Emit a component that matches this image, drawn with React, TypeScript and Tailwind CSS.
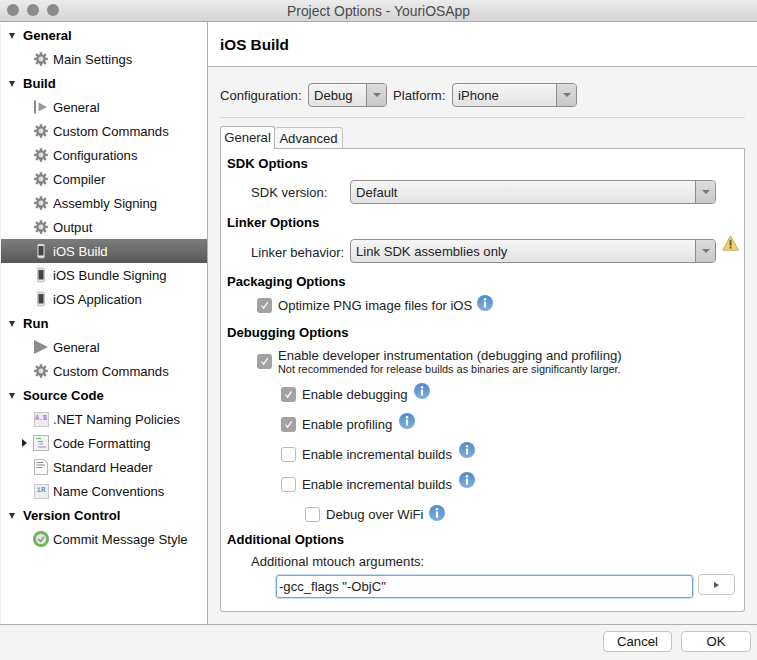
import type { ReactNode } from "react";

type IconKind = "gear" | "build" | "phone" | "run" | "naming" | "format" | "header" | "conv" | "commit";

type SideRow = { label: string; icon: IconKind; selected?: boolean; expandable?: boolean };
type SideGroup = { title: string; rows: SideRow[] };

const groups: SideGroup[] = [
  { title: "General", rows: [{ label: "Main Settings", icon: "gear" }] },
  {
    title: "Build",
    rows: [
      { label: "General", icon: "build" },
      { label: "Custom Commands", icon: "gear" },
      { label: "Configurations", icon: "gear" },
      { label: "Compiler", icon: "gear" },
      { label: "Assembly Signing", icon: "gear" },
      { label: "Output", icon: "gear" },
      { label: "iOS Build", icon: "phone", selected: true },
      { label: "iOS Bundle Signing", icon: "phone" },
      { label: "iOS Application", icon: "phone" },
    ],
  },
  {
    title: "Run",
    rows: [
      { label: "General", icon: "run" },
      { label: "Custom Commands", icon: "gear" },
    ],
  },
  {
    title: "Source Code",
    rows: [
      { label: ".NET Naming Policies", icon: "naming" },
      { label: "Code Formatting", icon: "format", expandable: true },
      { label: "Standard Header", icon: "header" },
      { label: "Name Conventions", icon: "conv" },
    ],
  },
  { title: "Version Control", rows: [{ label: "Commit Message Style", icon: "commit" }] },
];

function Gear() {
  return (
    <svg width="16" height="16" viewBox="0 0 16 16">
      <g stroke="#858585" strokeWidth="2.4">
        <line x1="8" y1="1.2" x2="8" y2="14.8" />
        <line x1="1.2" y1="8" x2="14.8" y2="8" />
        <line x1="3.2" y1="3.2" x2="12.8" y2="12.8" />
        <line x1="12.8" y1="3.2" x2="3.2" y2="12.8" />
      </g>
      <circle cx="8" cy="8" r="4.8" fill="#858585" />
      <circle cx="8" cy="8" r="2.4" fill="#e2e2e2" />
    </svg>
  );
}

function SideIcon({ kind }: { kind: IconKind }) {
  if (kind === "gear") return <Gear />;
  if (kind === "build")
    return (
      <svg width="16" height="16" viewBox="0 0 16 16">
        <rect x="1" y="1.5" width="2" height="13" fill="#8a8a8a" />
        <path d="M5.5 3.5 L14 8 L5.5 12.5 Z" fill="#999" />
      </svg>
    );
  if (kind === "phone")
    return (
      <svg width="16" height="16" viewBox="0 0 16 16">
        <rect x="4.5" y="1" width="7" height="14" rx="1.5" fill="#e4e4e4" stroke="#aaa" strokeWidth="0.7" />
        <rect x="5.5" y="3" width="5" height="9.5" fill="#444" />
      </svg>
    );
  if (kind === "run")
    return (
      <svg width="16" height="16" viewBox="0 0 16 16">
        <path d="M1 1 L15 8 L1 15 Z" fill="#8c8c8c" />
      </svg>
    );
  if (kind === "naming")
    return (
      <span className="flex h-[15px] w-[15px] items-center justify-center border border-[#c9c9c9] bg-[#efe9f1] font-['Liberation_Mono',monospace] text-[6.5px] font-bold leading-none text-[#b27ac4]">
        A.B
      </span>
    );
  if (kind === "conv")
    return (
      <span className="flex h-[15px] w-[15px] items-center justify-center border border-[#c9c9c9] bg-[#e9eef5] font-['Liberation_Mono',monospace] text-[7.5px] font-bold leading-none text-[#6f97c9]">
        iR
      </span>
    );
  if (kind === "format")
    return (
      <svg width="16" height="16" viewBox="0 0 16 16">
        <rect x="0.5" y="0.5" width="15" height="15" fill="#f2f2f2" stroke="#b5b5b5" />
        <line x1="3" y1="3.5" x2="8" y2="3.5" stroke="#6cb86c" />
        <line x1="5" y1="6.5" x2="10" y2="6.5" stroke="#6f97c9" />
        <line x1="6" y1="9" x2="10" y2="9" stroke="#6f97c9" />
        <line x1="5" y1="12" x2="13" y2="12" stroke="#bd7ccb" />
      </svg>
    );
  if (kind === "header")
    return (
      <svg width="16" height="16" viewBox="0 0 16 16">
        <path d="M1.5 0.5 H11 L14.5 4 V15.5 H1.5 Z" fill="#fafafa" stroke="#b5b5b5" />
        <line x1="3.5" y1="3.5" x2="10" y2="3.5" stroke="#8a8a8a" />
        <line x1="3.5" y1="6" x2="12" y2="6" stroke="#8a8a8a" />
        <line x1="3.5" y1="8.5" x2="9" y2="8.5" stroke="#8a8a8a" />
      </svg>
    );
  return (
    <svg width="16" height="16" viewBox="0 0 16 16">
      <circle cx="8" cy="8" r="8" fill="#6cb35c" />
      <circle cx="8" cy="8" r="5.2" fill="#dfe5dc" />
      <path d="M5.2 8 L7.4 10.4 L11 5.8" fill="none" stroke="#8d9a88" strokeWidth="1.6" />
    </svg>
  );
}

function Sidebar() {
  return (
    <div className="ml-px w-[207px] shrink-0 border-r border-[#b0b0b0] bg-white pt-px text-[13.1px]">
      {groups.map((group) => (
        <div key={group.title}>
          <div className="flex h-6 items-center pl-[8px] pt-[2px] font-bold text-black">
            <span className="mr-[8px] h-0 w-0 border-x-[3px] border-t-[6px] border-x-transparent border-t-[#333]" />
            {group.title}
          </div>
          {group.rows.map((row) => (
            <div
              key={row.label + row.icon}
              className={`relative flex h-6 items-center pl-[32px] ${
                row.selected ? "bg-gradient-to-b from-[#7d7d7d] to-[#585858] text-white" : "text-[#111]"
              }`}
            >
              {row.expandable && (
                <span className="absolute left-[21px] h-0 w-0 border-y-[4px] border-l-[5px] border-y-transparent border-l-[#222]" />
              )}
              <span className="mr-[4px] flex w-4 justify-center">
                <SideIcon kind={row.icon} />
              </span>
              <span className="pt-[2px]">{row.label}</span>
            </div>
          ))}
        </div>
      ))}
    </div>
  );
}

function Combo({ value, className }: { value: string; className: string }) {
  return (
    <div
      className={`flex h-6 items-stretch rounded-[4px] border border-[#8e8e8e] bg-gradient-to-b from-[#f6f6f6] to-[#e2e2e2] text-[13.1px] text-[#222] ${className}`}
    >
      <span className="flex-1 pl-[5px] pt-px leading-[22px]">{value}</span>
      <span className="flex w-5 items-center justify-center rounded-r-[3px] border-l border-[#8e8e8e] bg-gradient-to-b from-[#dcdcdc] to-[#c8c8c8]">
        <span className="h-0 w-0 border-x-[4px] border-t-[4px] border-x-transparent border-t-[#777]" />
      </span>
    </div>
  );
}

function Check({ checked }: { checked?: boolean }) {
  if (!checked) return <span className="h-[15px] w-[15px] shrink-0 rounded-[3px] border border-[#b9b9b9] bg-white" />;
  return (
    <span className="flex h-[15px] w-[15px] shrink-0 items-center justify-center rounded-[3px] bg-[#a2a2a2]">
      <svg width="11" height="11" viewBox="0 0 11 11">
        <path d="M2.5 5.5 L4.6 8.2 L8.6 2.4" fill="none" stroke="#fff" strokeWidth="1.2" />
      </svg>
    </span>
  );
}

function Info({ className }: { className: string }) {
  return (
    <svg width="16" height="16" viewBox="0 0 16 16" className={className}>
      <defs>
        <linearGradient id="infoFill" x1="0" y1="0" x2="0" y2="1">
          <stop offset="0" stopColor="#4f8ccb" />
          <stop offset="1" stopColor="#82aedb" />
        </linearGradient>
      </defs>
      <circle cx="8" cy="8" r="8" fill="url(#infoFill)" />
      <circle cx="8" cy="4.2" r="1.3" fill="#fff" />
      <rect x="6.9" y="6.5" width="2.2" height="6" fill="#fff" />
    </svg>
  );
}

function OptionRow({ checked, label, className, infoClass }: { checked?: boolean; label: string; className: string; infoClass: string }) {
  return (
    <div className={`flex h-4 items-center ${className}`}>
      <Check checked={checked} />
      <span className="ml-[6px] whitespace-nowrap pt-px">{label}</span>
      <Info className={`shrink-0 ${infoClass}`} />
    </div>
  );
}

function SectionTitle({ children, className }: { children: ReactNode; className: string }) {
  return <div className={`h-4 pt-px font-bold leading-4 text-black ${className}`}>{children}</div>;
}

function GeneralTab() {
  return (
    <div className="h-[464px] rounded-b-[3px] border border-[#b4b4b4] bg-white pl-[6px] text-[13.1px] text-[#222]">
      <SectionTitle className="mt-[6px]">SDK Options</SectionTitle>
      <div className="mt-[9px] flex h-6 items-center">
        <span className="ml-6 w-[99px] pt-px">SDK version:</span>
        <Combo value="Default" className="w-[366px]" />
      </div>
      <SectionTitle className="mt-[10px]">Linker Options</SectionTitle>
      <div className="mt-[9px] flex h-6 items-start">
        <span className="ml-6 mt-[4px] w-[99px] whitespace-nowrap">Linker behavior:</span>
        <Combo value="Link SDK assemblies only" className="w-[366px]" />
        <svg width="17" height="16" viewBox="0 0 17 16" className="-mt-[4px] ml-[6px]">
          <path d="M8.5 0.8 L16.3 15.2 H0.7 Z" fill="#ecd377" stroke="#c9ad57" strokeLinejoin="round" />
          <rect x="7.6" y="4.8" width="1.9" height="5.8" fill="#6e5a23" />
          <rect x="7.6" y="11.6" width="1.9" height="1.9" fill="#6e5a23" />
        </svg>
      </div>
      <SectionTitle className="mt-[10px]">Packaging Options</SectionTitle>
      <OptionRow checked label="Optimize PNG image files for iOS" className="mt-2 ml-[30px]" infoClass="ml-[5px] mb-[4px]" />
      <SectionTitle className="mt-[11px]">Debugging Options</SectionTitle>
      <div className="mt-[7px] ml-[30px] flex h-7 items-center">
        <Check checked />
        <div className="ml-[6px]">
          <div className="h-4 pt-px leading-4">Enable developer instrumentation (debugging and profiling)</div>
          <div className="h-3 text-[10.9px] leading-3">Not recommended for release builds as binaries are significantly larger.</div>
        </div>
      </div>
      <OptionRow checked label="Enable debugging" className="mt-[11px] ml-[54px]" infoClass="ml-[6px] mb-[7px]" />
      <OptionRow checked label="Enable profiling" className="mt-[14px] ml-[54px]" infoClass="ml-[7px] mb-[7px]" />
      <OptionRow label="Enable incremental builds" className="mt-[14px] ml-[54px]" infoClass="ml-[7px] mb-[8px]" />
      <OptionRow label="Enable incremental builds" className="mt-[14px] ml-[54px]" infoClass="ml-[7px] mb-[8px]" />
      <OptionRow label="Debug over WiFi" className="mt-[14px] ml-[78px]" infoClass="ml-[5px] mb-[2px]" />
      <SectionTitle className="mt-[9px]">Additional Options</SectionTitle>
      <div className="mt-[6px] ml-6 h-4 pt-px leading-4">Additional mtouch arguments:</div>
      <div className="mt-[6px] ml-[49px] flex items-start">
        <div className="h-[23px] w-[417px] rounded-[3px] border border-[#6ea6e0] pl-[2px] pt-px leading-5 shadow-[0_0_0_1px_#c9def4]">
          -gcc_flags "-ObjC"
        </div>
        <div className="ml-[5px] -mt-px flex h-[21px] w-[37px] items-center justify-center rounded-[4px] border border-[#c6c6c6] bg-white">
          <span className="h-0 w-0 border-y-[3px] border-l-[5px] border-y-transparent border-l-[#555]" />
        </div>
      </div>
    </div>
  );
}

function Main() {
  return (
    <div className="flex min-w-0 flex-1 flex-col bg-[#f4f4f4]">
      <div className="flex h-[45px] shrink-0 items-center border-b border-[#b0b0b0] bg-white pl-3 pt-[2px] text-[15.3px] font-bold text-black">
        iOS Build
      </div>
      <div className="px-3 text-[13.1px] text-[#222]">
        <div className="mt-4 flex h-6 items-center">
          <span className="w-[88px] pt-px">Configuration:</span>
          <Combo value="Debug" className="w-[79px]" />
          <span className="ml-[6px] w-[59px] pt-px">Platform:</span>
          <Combo value="iPhone" className="w-[125px]" />
        </div>
        <div className="mt-[10px] h-px w-[525px] bg-[#d4d4d4]" />
        <div className="mt-2 flex items-end">
          <div className="relative z-10 -mb-px flex h-[23px] w-[55px] items-center justify-center rounded-t-[3px] border border-b-0 border-[#b4b4b4] bg-white">
            General
          </div>
          <div className="flex h-[21px] w-[68px] items-center justify-center rounded-t-[3px] border border-b-0 border-l-0 border-[#c4c4c4] bg-[#f7f7f7] pt-px">
            Advanced
          </div>
        </div>
        <div className="w-[525px]">
          <GeneralTab />
        </div>
      </div>
    </div>
  );
}

function Footer() {
  return (
    <div className="flex h-9 shrink-0 items-start justify-end gap-[9px] border-t border-[#b0b0b0] pr-[6px] pt-[6px] text-[13.1px] text-[#111]">
      <div className="flex h-[21px] w-[69px] items-center justify-center rounded-[4px] border border-[#c4c4c4] bg-white pt-px">Cancel</div>
      <div className="flex h-[21px] w-[70px] items-center justify-center rounded-[4px] border border-[#c4c4c4] bg-white pt-px">OK</div>
    </div>
  );
}

export default function App() {
  return (
    <div className="flex h-[660px] w-[757px] flex-col overflow-hidden bg-[#f4f4f4] font-['Liberation_Sans',Arial,sans-serif]">
      <div className="relative flex h-[22px] shrink-0 items-center justify-center border-b border-[#a8a8a8] bg-gradient-to-b from-[#ececec] to-[#d4d4d4] pt-px text-[13.9px] text-[#4a4a4a]">
        <div className="absolute left-[7px] top-[4px] flex gap-2">
          <span className="h-3 w-3 rounded-full bg-[#8b8b90]" />
          <span className="h-3 w-3 rounded-full bg-[#8b8b90]" />
          <span className="h-3 w-3 rounded-full bg-[#8b8b90]" />
        </div>
        Project Options - YouriOSApp
      </div>
      <div className="flex h-[602px] shrink-0">
        <Sidebar />
        <Main />
      </div>
      <Footer />
    </div>
  );
}
